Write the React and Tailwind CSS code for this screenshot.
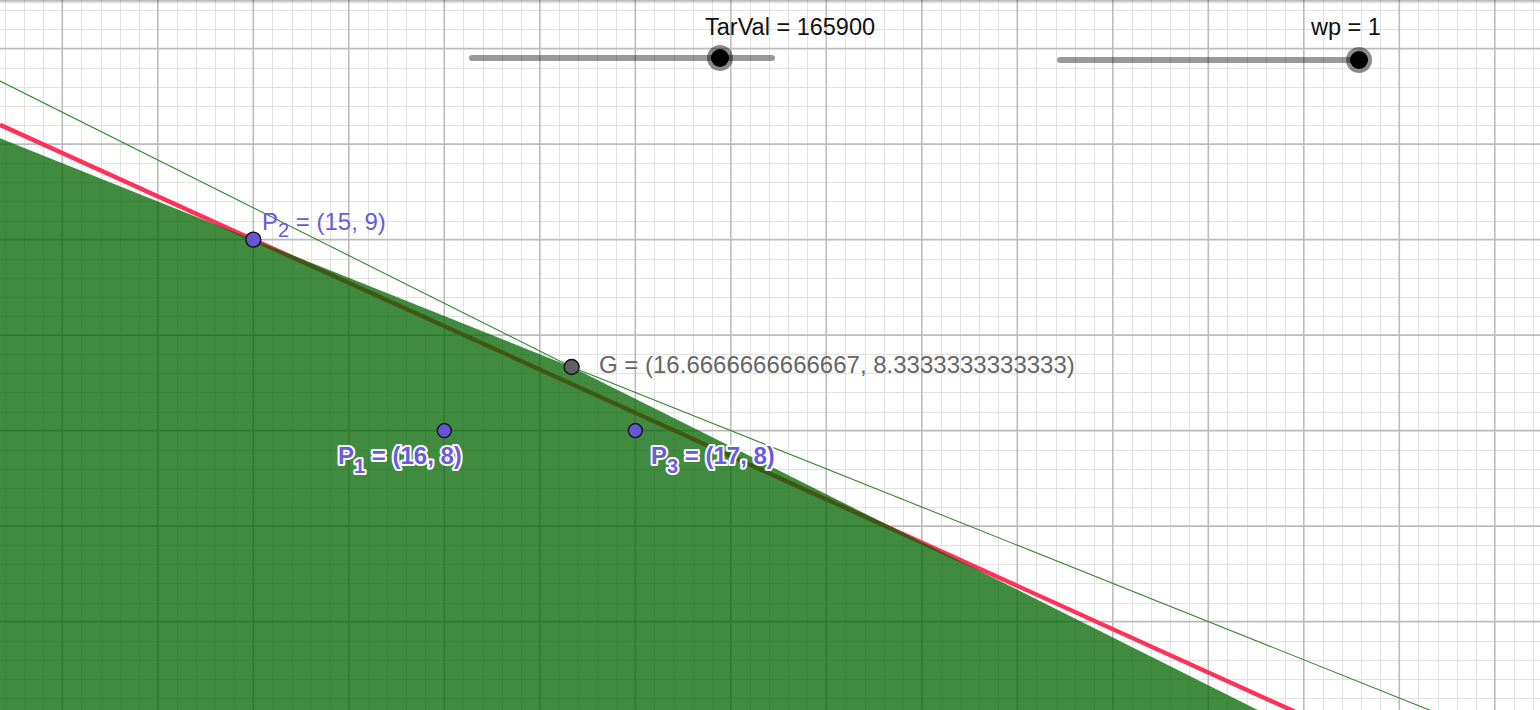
export default function App() {
  const W = 1540;
  const H = 710;
  const step = 19.1;
  const x0 = 253.3; // X = 15
  const y0 = 239.6; // Y = 9
  const unit = 191;
  const px = (X) => x0 + (X - 15) * unit;
  const py = (Y) => y0 - (Y - 9) * unit;

  const vLines = [];
  for (let k = -14; k <= 70; k++) {
    const x = x0 + k * step;
    if (x < -2 || x > W + 2) continue;
    vLines.push({ x, major: k % 5 === 0 });
  }
  const hLines = [];
  for (let k = -14; k <= 30; k++) {
    const y = y0 + k * step;
    if (y < -2 || y > H + 2) continue;
    hLines.push({ y, major: k % 5 === 0 });
  }

  const G = { x: px(16.6666667), y: py(8.3333333) };
  const P1 = { x: px(16), y: py(8) };
  const P2 = { x: px(15), y: py(9) };
  const P3 = { x: px(17), y: py(8) };

  const fillLeftY = G.y - G.x * 0.4;
  const fillRightX = G.x + (H - G.y) / 0.5;
  const thinLeftY = G.y - G.x * 0.5;
  const thinRightY = G.y + (W - G.x) * 0.4;
  const redSlope = 0.4532;
  const redY0 = P2.y - P2.x * redSlope;
  const redY1 = P2.y + (W - P2.x) * redSlope;

  return (
    <div className="relative w-[1540px] h-[710px] overflow-hidden bg-white font-['Liberation_Sans',Arial,sans-serif]">
      <svg className="absolute inset-0" width={W} height={H} viewBox={`0 0 ${W} ${H}`}>
        {vLines.filter((l) => !l.major).map((l, i) => (
          <line key={`vm${i}`} x1={Math.round(l.x) + 0.5} y1={0} x2={Math.round(l.x) + 0.5} y2={H} stroke="#e2e2e2" strokeWidth={1} />
        ))}
        {hLines.filter((l) => !l.major).map((l, i) => (
          <line key={`hm${i}`} x1={0} y1={Math.round(l.y) + 0.5} x2={W} y2={Math.round(l.y) + 0.5} stroke="#e2e2e2" strokeWidth={1} />
        ))}
        {vLines.filter((l) => l.major).map((l, i) => (
          <line key={`vM${i}`} x1={l.x} y1={0} x2={l.x} y2={H} stroke="#bcbcbc" strokeWidth={1.6} />
        ))}
        {hLines.filter((l) => l.major).map((l, i) => (
          <line key={`hM${i}`} x1={0} y1={l.y} x2={W} y2={l.y} stroke="#bcbcbc" strokeWidth={1.6} />
        ))}

        <line x1={0} y1={redY0} x2={W} y2={redY1} stroke="#ff3158" strokeWidth={4.3} />

        <polygon
          points={`0,${fillLeftY} ${G.x},${G.y} ${fillRightX},${H} 0,${H}`}
          fill="rgba(0,100,0,0.75)"
        />

        <polyline
          points={`0,${thinLeftY} ${G.x},${G.y} ${W},${thinRightY}`}
          fill="none"
          stroke="#2f8a2f"
          strokeWidth={1.1}
        />

        <circle cx={P2.x} cy={P2.y} r={7.5} fill="#6557d6" stroke="#111" strokeWidth={1.4} />
        <circle cx={P1.x} cy={P1.y} r={7} fill="#6557d6" stroke="#111" strokeWidth={1.4} />
        <circle cx={P3.x} cy={P3.y} r={7} fill="#6557d6" stroke="#111" strokeWidth={1.4} />
        <circle cx={G.x} cy={G.y} r={7.5} fill="#616161" stroke="#111" strokeWidth={1.4} />

        <text x={262} y={230} className="text-[24px] fill-[#6b5bd9]">
          P<tspan className="text-[20px]" dy={7}>2</tspan>
          <tspan dy={-7}> = (15, 9)</tspan>
        </text>
        <text x={599} y={372.5} className="text-[24px] fill-[#666666]">
          G = (16.6666666666667, 8.3333333333333)
        </text>
        <text
          x={338}
          y={464}
          className="text-[24px] font-bold fill-[#6b5bd9]"
          stroke="#ffffff"
          strokeWidth={4}
          strokeLinejoin="round"
          paintOrder="stroke"
        >
          P<tspan className="text-[20px]" dy={9}>1</tspan>
          <tspan dy={-9}> = (16, 8)</tspan>
        </text>
        <text
          x={651}
          y={464}
          className="text-[24px] font-bold fill-[#6b5bd9]"
          stroke="#ffffff"
          strokeWidth={4}
          strokeLinejoin="round"
          paintOrder="stroke"
        >
          P<tspan className="text-[20px]" dy={9}>3</tspan>
          <tspan dy={-9}> = (17, 8)</tspan>
        </text>
        <text x={705} y={35} className="text-[23.5px] fill-[#111111]">TarVal = 165900</text>
        <text x={1311} y={35} className="text-[23.5px] fill-[#111111]">wp = 1</text>
      </svg>

      {/* slider TarVal */}
      <div className="absolute left-[469px] top-[55px] w-[306px] h-[6px] rounded-full bg-black/40" />
      <div className="absolute left-[707px] top-[45px] w-[26px] h-[26px] rounded-full bg-black/45 flex items-center justify-center">
        <div className="w-[18px] h-[18px] rounded-full bg-black" />
      </div>

      {/* slider wp */}
      <div className="absolute left-[1057px] top-[57px] w-[303px] h-[6px] rounded-full bg-black/40" />
      <div className="absolute left-[1346px] top-[47px] w-[26px] h-[26px] rounded-full bg-black/45 flex items-center justify-center">
        <div className="w-[18px] h-[18px] rounded-full bg-black" />
      </div>

      <div className="absolute left-0 right-0 top-0 h-[4px] bg-linear-to-b from-black/30 to-transparent" />
    </div>
  );
}
